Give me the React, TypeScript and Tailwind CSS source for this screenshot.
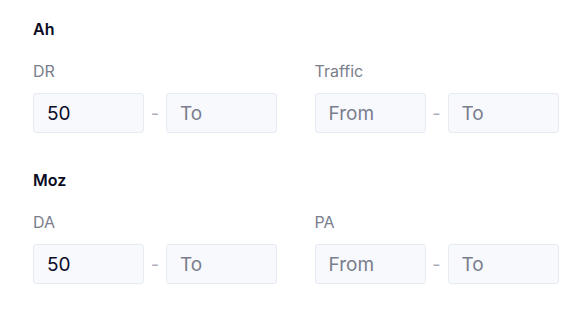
import React from "react"

type Range = { from?: string; to?: string }

type Field = { label: string; value: Range }

type Group = { title: string; fields: Field[] }

const groups: Group[] = [
  {
    title: "Ah",
    fields: [
      { label: "DR", value: { from: "50" } },
      { label: "Traffic", value: {} },
    ],
  },
  {
    title: "Moz",
    fields: [
      { label: "DA", value: { from: "50" } },
      { label: "PA", value: {} },
    ],
  },
]

function RangeInput({ value, placeholder }: { value?: string; placeholder: string }) {
  return (
    <input
      readOnly
      value={value ?? ""}
      placeholder={placeholder}
      className="h-10 w-[111px] rounded-[3px] border border-[#e6ebf3] bg-[#f7f9fc] px-[13px] text-[19px] text-[#0b0b2a] outline-none placeholder:text-[#7a7d8c]"
    />
  )
}

function RangeField({ field }: { field: Field }) {
  return (
    <div className="flex flex-col">
      <label className="text-[16px] leading-5 text-[#7b7e8c]">{field.label}</label>
      <div className="mt-[12px] flex items-center">
        <RangeInput value={field.value.from} placeholder="From" />
        <span className="w-[22px] text-center text-[18px] text-[#a9acb6]">-</span>
        <RangeInput value={field.value.to} placeholder="To" />
      </div>
    </div>
  )
}

export default function App() {
  return (
    <div
      className="min-h-screen bg-white pl-[33px] pt-[19px]"
      style={{ fontFamily: "Inter, 'Noto Sans', sans-serif" }}
    >
      <div className="flex w-[526px] flex-col gap-[37px]">
        {groups.map((group) => (
          <section key={group.title}>
            <h3 className="text-[16px] font-semibold leading-5 text-[#0a0a23]">{group.title}</h3>
            <div className="mt-[22px] grid grid-cols-2 gap-[37px]">
              {group.fields.map((field) => (
                <RangeField key={field.label} field={field} />
              ))}
            </div>
          </section>
        ))}
      </div>
    </div>
  )
}
